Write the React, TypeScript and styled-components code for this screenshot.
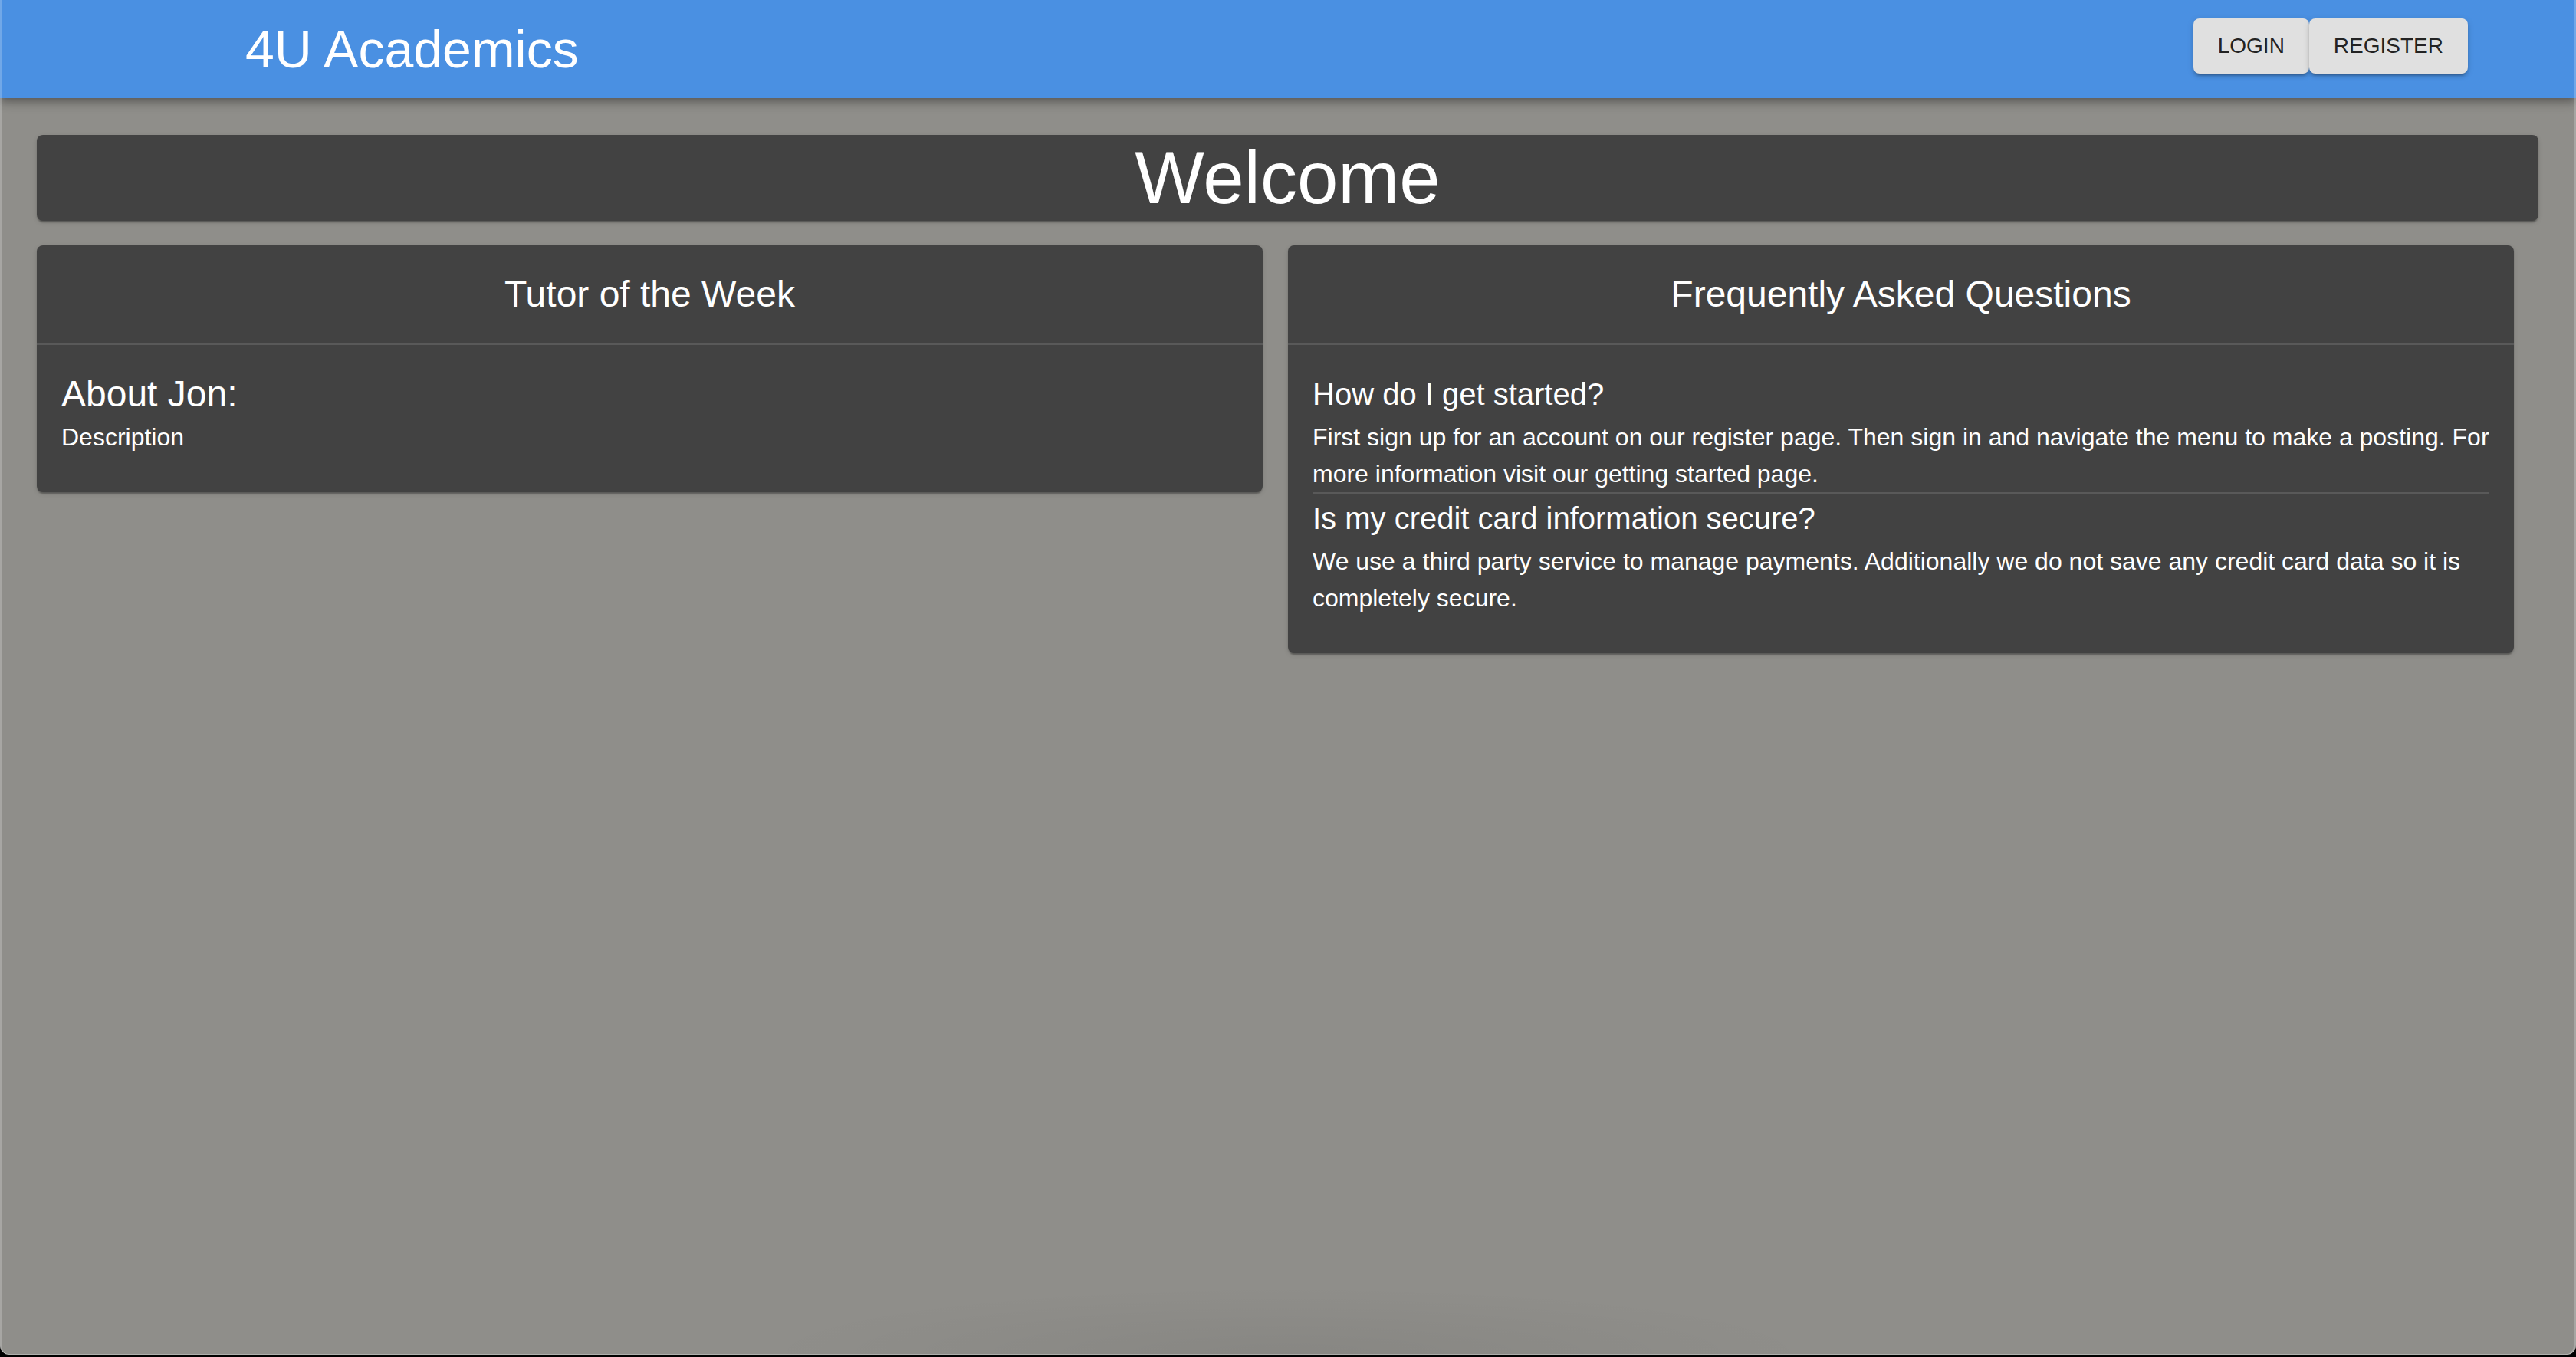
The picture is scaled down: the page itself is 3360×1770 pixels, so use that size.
import React from "react";
import styled, { createGlobalStyle } from "styled-components";

const GlobalStyle = createGlobalStyle`
  html, body {
    margin: 0;
    padding: 0;
    background: #000;
  }
  body {
    font-family: "Liberation Sans", Arial, Helvetica, sans-serif;
    -webkit-font-smoothing: antialiased;
  }
  * { box-sizing: border-box; }
`;

const Window = styled.div`
  position: relative;
  width: 3360px;
  height: 1767px;
  overflow: hidden;
  border-radius: 0 0 12px 12px;
  background:
    radial-gradient(ellipse 700px 90px at 50% 100%, rgba(0, 0, 0, 0.055), rgba(0, 0, 0, 0) 100%),
    #8f8e8a;
  display: flex;
  flex-direction: column;

  &::after {
    content: "";
    position: absolute;
    inset: 0;
    border-radius: 0 0 12px 12px;
    pointer-events: none;
    box-shadow:
      inset 2px 0 0 rgba(255, 255, 255, 0.22),
      inset -3px 0 0 rgba(255, 255, 255, 0.22),
      inset 0 -1px 0 rgba(255, 255, 255, 0.3);
    z-index: 5;
  }
`;

const AppBar = styled.header`
  position: relative;
  z-index: 2;
  height: 128px;
  flex: 0 0 128px;
  background: #4a90e2;
  display: flex;
  align-items: center;
  justify-content: space-between;
  padding: 0 141px 0 320px;
  box-shadow:
    0 4px 8px -2px rgba(0, 0, 0, 0.2),
    0 8px 10px 0 rgba(0, 0, 0, 0.14),
    0 2px 20px 0 rgba(0, 0, 0, 0.12);
`;

const Brand = styled.h1`
  margin: 0;
  font-size: 68px;
  line-height: 84px;
  font-weight: 400;
  color: #ffffff;
  letter-spacing: 0;
`;

const ButtonRow = styled.div`
  display: flex;
  align-self: flex-start;
  margin-top: 24px;
`;

const NavButton = styled.button`
  font-family: "Liberation Sans", Arial, Helvetica, sans-serif;
  font-size: 28px;
  line-height: 48px;
  font-weight: 500;
  text-transform: uppercase;
  color: rgba(0, 0, 0, 0.87);
  background: #e0e0e0;
  border: none;
  border-radius: 8px;
  padding: 12px 32px;
  min-width: 128px;
  cursor: pointer;
  box-shadow:
    0 6px 2px -4px rgba(0, 0, 0, 0.2),
    0 4px 4px 0 rgba(0, 0, 0, 0.14),
    0 2px 10px 0 rgba(0, 0, 0, 0.12);
`;

const Main = styled.main`
  display: flex;
  flex-direction: column;
  padding: 48px 49px 0 48px;
`;

const Paper = styled.section`
  background: #424242;
  color: #ffffff;
  border-radius: 8px;
  box-shadow:
    0 4px 2px -2px rgba(0, 0, 0, 0.2),
    0 2px 2px 0 rgba(0, 0, 0, 0.14),
    0 2px 6px 0 rgba(0, 0, 0, 0.12);
`;

const WelcomeBanner = styled(Paper)`
  text-align: center;
`;

const WelcomeTitle = styled.h2`
  margin: 0;
  font-size: 96px;
  line-height: 112px;
  font-weight: 400;
`;

const CardGrid = styled.div`
  display: grid;
  grid-template-columns: 1fr 1fr;
  gap: 33px;
  margin-top: 32px;
  margin-right: 32px;
  align-items: start;
`;

const CardHeader = styled.div`
  padding: 32px;
  text-align: center;
  border-bottom: 2px solid rgba(255, 255, 255, 0.12);
`;

const CardTitle = styled.h3`
  margin: 0;
  font-size: 48px;
  line-height: 64px;
  font-weight: 400;
`;

const CardContent = styled.div`
  padding: 32px 32px 48px 32px;
`;

const Item = styled.div<{ $divided?: boolean }>`
  border-bottom: ${(p) => (p.$divided ? "2px solid rgba(255, 255, 255, 0.12)" : "none")};
`;

const Heading = styled.h4<{ $small?: boolean }>`
  margin: 0;
  font-size: ${(p) => (p.$small ? "40px" : "48px")};
  line-height: 64px;
  font-weight: 400;
`;

const Body = styled.p`
  margin: 0 -4px 0 0;
  font-size: 32px;
  line-height: 48px;
  font-weight: 400;
`;

const faqs = [
  {
    q: "How do I get started?",
    a: "First sign up for an account on our register page. Then sign in and navigate the menu to make a posting. For more information visit our getting started page.",
  },
  {
    q: "Is my credit card information secure?",
    a: "We use a third party service to manage payments. Additionally we do not save any credit card data so it is completely secure.",
  },
];

export default function App() {
  return (
    <>
      <GlobalStyle />
      <Window>
        <AppBar>
          <Brand>4U Academics</Brand>
          <ButtonRow>
            <NavButton>Login</NavButton>
            <NavButton>Register</NavButton>
          </ButtonRow>
        </AppBar>
        <Main>
          <WelcomeBanner>
            <WelcomeTitle>Welcome</WelcomeTitle>
          </WelcomeBanner>
          <CardGrid>
            <Paper>
              <CardHeader>
                <CardTitle>Tutor of the Week</CardTitle>
              </CardHeader>
              <CardContent>
                <Heading>About Jon:</Heading>
                <Body>Description</Body>
              </CardContent>
            </Paper>
            <Paper>
              <CardHeader>
                <CardTitle>Frequently Asked Questions</CardTitle>
              </CardHeader>
              <CardContent>
                {faqs.map((f, i) => (
                  <Item key={f.q} $divided={i < faqs.length - 1}>
                    <Heading $small>{f.q}</Heading>
                    <Body>{f.a}</Body>
                  </Item>
                ))}
              </CardContent>
            </Paper>
          </CardGrid>
        </Main>
      </Window>
    </>
  );
}
